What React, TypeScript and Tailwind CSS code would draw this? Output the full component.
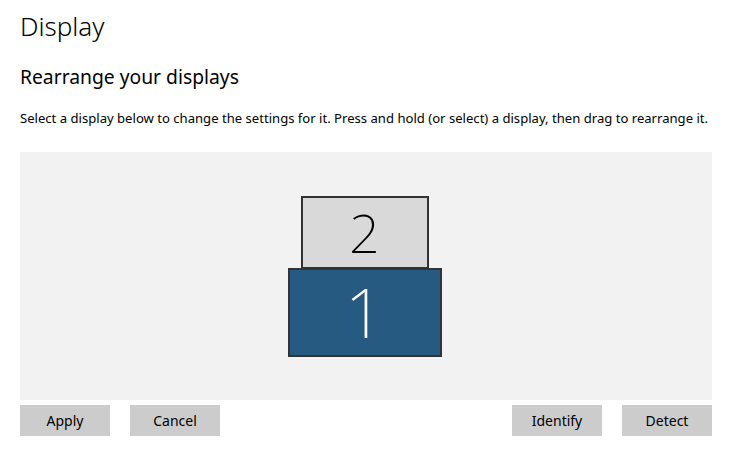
export default function App() {
  return (
    <div className="w-[731px] h-[453px] bg-white text-black font-['Segoe_UI','Noto_Sans',sans-serif]">
      <div className="pl-5 pr-[19px]">
        <h1 className="pt-[6px] text-[26px] leading-[40px] font-light">Display</h1>
        <h2 className="mt-[18px] text-[19.3px] leading-[26px]">Rearrange your displays</h2>
        <p className="mt-[19px] text-[13.1px] leading-[18px] whitespace-nowrap">
          Select a display below to change the settings for it. Press and hold (or select) a display, then drag to rearrange it.
        </p>

        <div className="mt-[25px] h-[248px] pr-[3px] bg-[#f2f2f2] flex flex-col items-center justify-center">
          <div className="w-[128px] h-[73px] bg-[#d9d9d9] border-2 border-[#333333] flex items-center justify-center text-[54px] font-extralight leading-none">
            2
          </div>
          <div className="w-[154px] h-[89px] -mt-px bg-[#265a80] border-2 border-[#333333] flex items-center justify-center text-white text-[68px] font-extralight leading-none">
            1
          </div>
        </div>

        <div className="mt-[5px] flex items-center">
          <button className="w-[90px] h-[31px] bg-[#cccccc] text-[14px]">Apply</button>
          <button className="ml-5 w-[90px] h-[31px] bg-[#cccccc] text-[14px]">Cancel</button>
          <div className="flex-1" />
          <button className="w-[90px] h-[31px] bg-[#cccccc] text-[14px]">Identify</button>
          <button className="ml-5 w-[90px] h-[31px] bg-[#cccccc] text-[14px]">Detect</button>
        </div>
      </div>
    </div>
  );
}
